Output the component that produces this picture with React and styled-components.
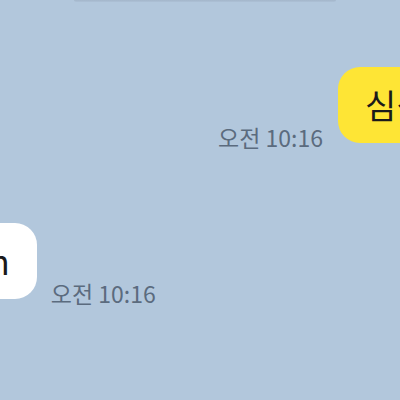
import React from 'react';
import styled, { createGlobalStyle } from 'styled-components';

const GlobalStyle = createGlobalStyle`
    html, body {
        margin: 0;
        padding: 0;
        background: #b2c7dc;
    }
    body {
        font-family: "Noto Sans CJK KR", "Noto Sans", sans-serif;
    }
`

const ChatRoom = styled.div`
    width: 400px;
    height: 400px;
    overflow: hidden;
    background: #b2c7dc;
    display: flex;
    flex-flow: column nowrap;
`

const TopEdge = styled.div`
    width: 262px;
    height: 2px;
    margin-left: 74px;
    background: linear-gradient(to bottom, #a3b6ca, #adc1d6);
    border-radius: 0 0 2px 2px;
`

const Row = styled.div`
    display: flex;
    align-items: flex-end;
    margin-top: ${props => props.top}px;
    padding-left: ${props => props.indent || 0}px;
`

const Bubble = styled.div`
    flex-shrink: 0;
    height: 76px;
    display: flex;
    align-items: center;
    padding: 0 27px;
    border-radius: 22px;
    margin-bottom: 6px;
    margin-left: ${props => props.shift || 0}px;
    background: ${props => props.mine ? '#fee535' : '#ffffff'};
    color: #1a1a1a;
    font-size: 34px;
    line-height: 1;
    white-space: nowrap;
`

const Time = styled.span`
    flex-shrink: 0;
    font-size: 23px;
    line-height: 1;
    color: #5b6b7e;
    margin: ${props => props.side === 'left' ? '0 15px 0 0' : '0 0 0 14px'};
    white-space: nowrap;
`

const App = () => {
    return(
        <ChatRoom>
            <GlobalStyle/>
            <TopEdge/>
            <Row top={65} indent={218}>
                <Time side="left">오전 10:16</Time>
                <Bubble mine>심심해</Bubble>
            </Row>
            <Row top={74}>
                <Bubble shift={-38}>n</Bubble>
                <Time side="right">오전 10:16</Time>
            </Row>
        </ChatRoom>
    )
}

export default App
